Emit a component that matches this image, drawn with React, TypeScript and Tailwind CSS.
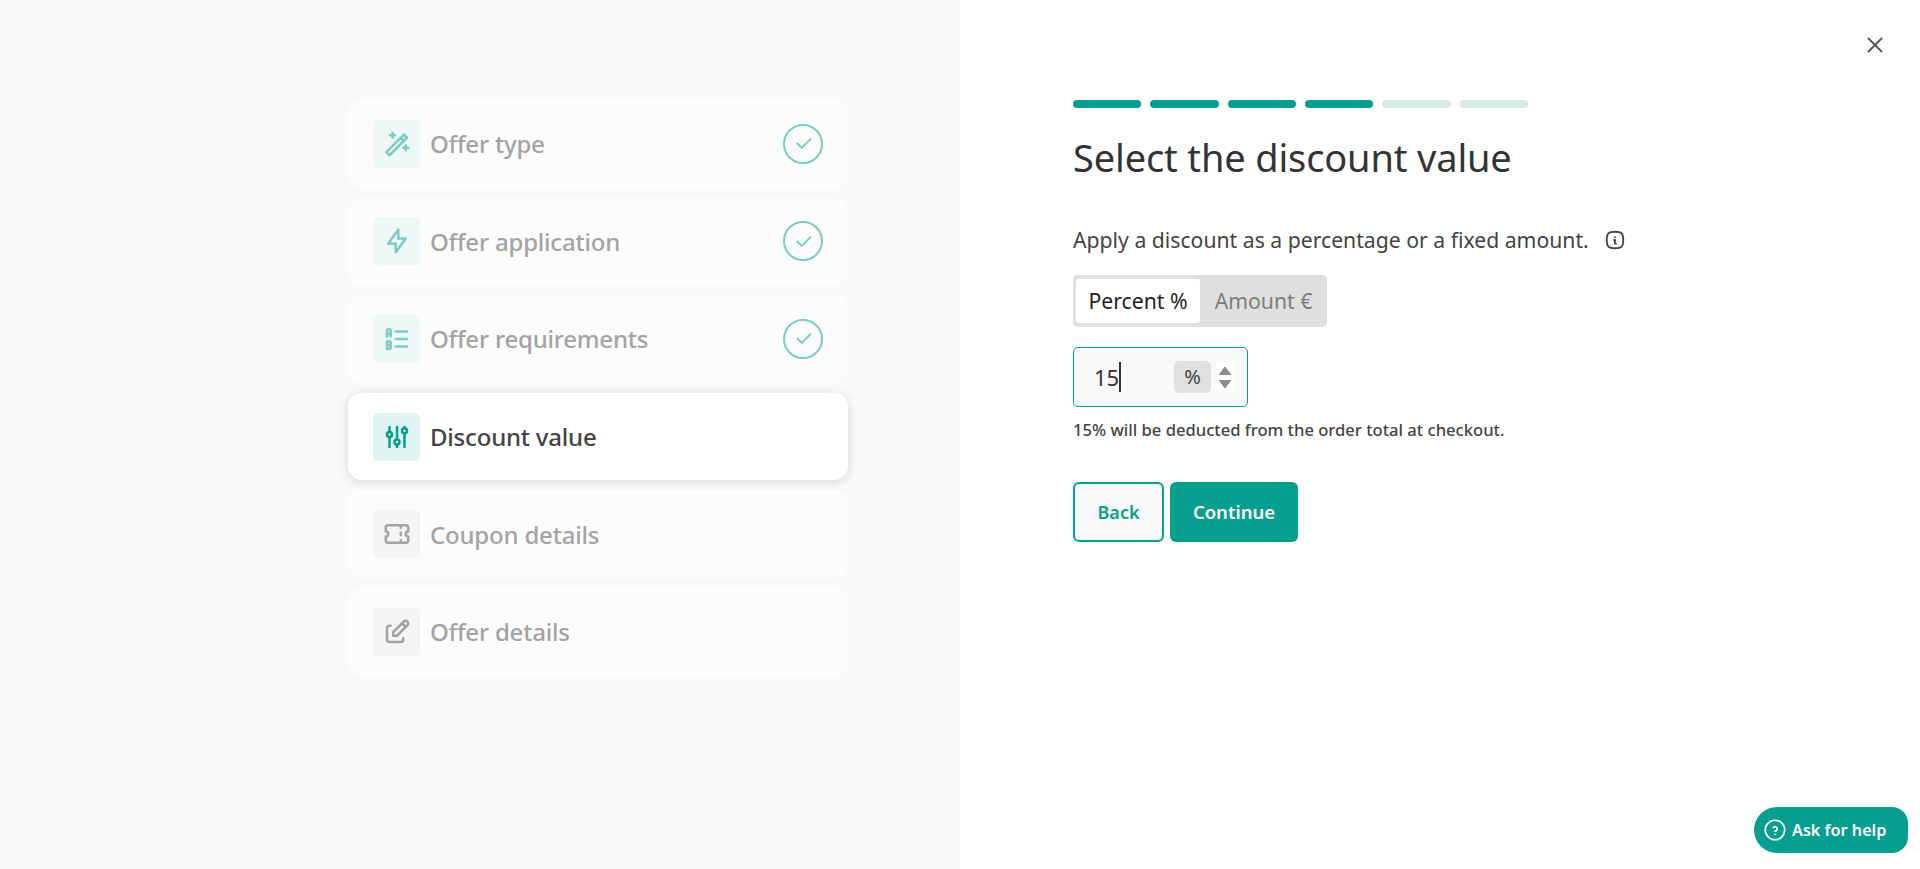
import React from 'react';
import { TbBolt, TbListLetters, TbAdjustments, TbTicket, TbEdit, TbInfoSquareRounded, TbHelpCircle, TbCheck, TbX } from 'react-icons/tb';

// tabler's wand has no box shape, this one follows the reference
const WandIcon: React.FC<{ size?: number }> = ({ size = 29 }) => (
  <svg width={size} height={size} viewBox="0 0 24 24" fill="none" stroke="currentColor" strokeWidth="2" strokeLinejoin="round" strokeLinecap="round">
    <path d="M3.5 18.5L17.5 4.5L20 7L6 21Z" />
    <path d="M15 7L17.5 9.5" />
    <path d="M8.5 3V7M6.5 5H10.5" />
    <path d="M19 13V17M17 15H21" />
  </svg>
);

const steps = [
  { name: 'Offer type', Icon: WandIcon, state: 'done' },
  { name: 'Offer application', Icon: TbBolt, state: 'done' },
  { name: 'Offer requirements', Icon: TbListLetters, state: 'done' },
  { name: 'Discount value', Icon: TbAdjustments, state: 'active' },
  { name: 'Coupon details', Icon: TbTicket, state: 'todo' },
  { name: 'Offer details', Icon: TbEdit, state: 'todo' },
];

const bars = [true, true, true, true, false, false];

const App: React.FC = () => {
  return (
    <div className="flex h-[869px] w-full overflow-hidden bg-white font-['Noto_Sans',sans-serif] text-[#333]">
      <div className="flex w-[960px] flex-col items-start bg-[#f9f9f9] pl-[348px] pt-[100px]">
        <div className="flex w-[500px] flex-col gap-[10px]">
          {steps.map((step) => (
            <div
              key={step.name}
              className={`flex h-[87.6px] items-center rounded-[14px] pl-[25px] pr-[25px] ${
                step.state === 'active' ? 'bg-white shadow-[0_2px_12px_rgba(0,0,0,0.14)]' : 'bg-[#fcfcfc]'
              }`}
            >
              <div
                className={`flex h-[48px] w-[47px] items-center justify-center rounded-[5px] ${
                  step.state === 'active' ? 'bg-[#e0f5f3] text-[#069e8e]' : step.state === 'done' ? 'bg-[#eef8f7] text-[#79cdc3]' : 'bg-[#f4f4f4] text-[#a3a3a3]'
                }`}
              >
                <step.Icon size={30} />
              </div>
              <span
                className={`ml-[10px] mt-[1px] flex-1 text-[24px] font-medium tracking-[-0.2px] ${
                  step.state === 'active' ? 'text-[#444]' : 'text-[#a3a3a3]'
                }`}
              >
                {step.name}
              </span>
              {step.state === 'done' && (
                <div className="flex h-[40px] w-[40px] items-center justify-center rounded-full border-[2px] border-[#79cdc3] text-[#79cdc3]">
                  <TbCheck size={21} strokeWidth={2.4} />
                </div>
              )}
            </div>
          ))}
        </div>
      </div>

      <div className="relative flex-1 pl-[113px] pt-[100px]">
        <button className="absolute right-[32px] top-[32px] text-[#555]">
          <TbX size={26} strokeWidth={1.7} />
        </button>

        <div className="flex w-[455px] gap-[9px]">
          {bars.map((on, i) => (
            <div key={i} className={`h-[8px] flex-1 rounded-full ${on ? 'bg-[#069e8e]' : 'bg-[#d6ebe8]'}`} />
          ))}
        </div>

        <h1 className="mt-[21px] text-[38px] font-normal leading-[56px] tracking-[-0.15px] text-[#333]">Select the discount value</h1>

        <div className="mt-[39px] flex items-center text-[21.2px] leading-[32px] text-[#444]">
          <span>Apply a discount as a percentage or a fixed amount.</span>
          <TbInfoSquareRounded size={22} className="ml-[15px]" />
        </div>

        <div className="mt-[19px] inline-flex h-[52px] w-[254px] items-center rounded-[5px] bg-[#dfdfdf] pl-[3px] text-[21.2px]">
          <div className="flex h-[44px] w-[124px] items-center justify-center rounded-[3px] bg-white text-[#222]">Percent %</div>
          <div className="flex h-[44px] flex-1 items-center justify-center text-[#7d7d7d]">Amount €</div>
        </div>

        <div className="mt-[20px] flex h-[60px] w-[175px] items-center rounded-[5px] border border-[#069e8e] bg-[#f9f9f9] pl-[20px] pr-[13px] text-[22px]">
          <span className="text-[#333]">15</span>
          <span className="h-[30px] w-[2px] bg-[#333]" />
          <span className="ml-auto flex h-[32px] w-[37px] items-center justify-center rounded-[5px] bg-[#e0e0e0] text-[20px] text-[#444]">%</span>
          <span className="ml-[5px] flex h-[30px] w-[18px] flex-col items-center justify-center gap-[5px] bg-white">
            <svg width="12" height="8" viewBox="0 0 12 8"><path d="M6 0L12 8H0Z" fill="#8c8c8c" stroke="#8c8c8c" strokeLinejoin="round" /></svg>
            <svg width="12" height="8" viewBox="0 0 12 8"><path d="M0 0H12L6 8Z" fill="#8c8c8c" stroke="#8c8c8c" strokeLinejoin="round" /></svg>
          </span>
        </div>

        <p className="mt-[11px] text-[16.6px] font-medium leading-[24px] text-[#444]">15% will be deducted from the order total at checkout.</p>

        <div className="mt-[40px] flex gap-[6px]">
          <button className="h-[60px] w-[91px] rounded-[6px] border-2 border-[#069e8e] bg-[#f9f9f9] text-[18px] font-semibold text-[#069e8e]">Back</button>
          <button className="h-[60px] w-[128px] rounded-[6px] bg-[#069e8e] text-[18.5px] font-semibold text-white">Continue</button>
        </div>

        <button className="absolute bottom-[16px] right-[12px] flex h-[46px] w-[154px] items-center gap-[4px] rounded-l-[23px] rounded-r-[16px] bg-[#069e8e] pl-[8px] text-[16.2px] font-semibold text-white">
          <TbHelpCircle size={26} strokeWidth={1.6} />
          Ask for help
        </button>
      </div>
    </div>
  );
};

export default App;
